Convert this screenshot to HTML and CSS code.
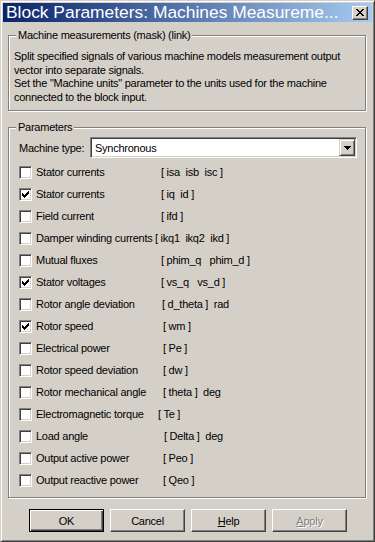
FILE: index.html
```html
<!DOCTYPE html>
<html>
<head>
<meta charset="utf-8">
<title>Block Parameters</title>
<link rel="stylesheet" href="styles.css">
</head>
<body>
<div class="window">
  <div class="titlebar">
    <span class="title">Block Parameters: Machines Measureme...</span>
    <span class="close">
      <svg width="8" height="7" viewBox="0 0 8 7" shape-rendering="crispEdges"><path fill="#000" d="M0 0h2v1h-2zM6 0h2v1h-2zM1 1h2v1h-2zM5 1h2v1h-2zM2 2h4v1h-4zM3 3h2v1h-2zM2 4h4v1h-4zM1 5h2v1h-2zM5 5h2v1h-2zM0 6h2v1h-2zM6 6h2v1h-2z"/></svg>
    </span>
  </div>

  <fieldset class="group group-desc">
    <legend>Machine measurements (mask) (link)</legend>
    <p class="desc">Split specified signals of various machine models measurement output<br>vector into separate signals.<br>Set the "Machine units" parameter to the units used for the machine<br>connected to the block input.</p>
  </fieldset>

  <fieldset class="group group-params">
    <legend>Parameters</legend>
    <div class="params-body">
      <div class="type-row">
        <span class="type-label">Machine type:</span>
        <div class="select">
          <span class="select-value">Synchronous</span>
          <span class="select-btn">
            <svg width="7" height="4" viewBox="0 0 7 4" shape-rendering="crispEdges"><path fill="#000" d="M0 0h7v1h-1v1h-1v1h-1v1h-1v-1h-1v-1h-1v-1h-1z"/></svg>
          </span>
        </div>
      </div>
      <ul class="signals">
        <li class="signal"><span class="cb"></span><span class="name">Stator currents</span><span class="unit">[ isa  isb  isc ]</span></li>
        <li class="signal"><span class="cb"><svg width="7" height="7" viewBox="0 0 7 7" shape-rendering="crispEdges"><path fill="#000" d="M0 2h1v1h1v1h1v-1h1v-1h1v-1h1v-1h1v3h-1v1h-1v1h-1v1h-1v1h-1v-1h-1v-1h-1z"/></svg></span><span class="name">Stator currents</span><span class="unit">[ iq  id ]</span></li>
        <li class="signal"><span class="cb"></span><span class="name">Field current</span><span class="unit">[ ifd ]</span></li>
        <li class="signal"><span class="cb"></span><span class="name">Damper winding currents</span><span class="unit u-m6">[ ikq1  ikq2  ikd ]</span></li>
        <li class="signal"><span class="cb"></span><span class="name">Mutual fluxes</span><span class="unit">[ phim_q   phim_d ]</span></li>
        <li class="signal"><span class="cb"><svg width="7" height="7" viewBox="0 0 7 7" shape-rendering="crispEdges"><path fill="#000" d="M0 2h1v1h1v1h1v-1h1v-1h1v-1h1v-1h1v3h-1v1h-1v1h-1v1h-1v1h-1v-1h-1v-1h-1z"/></svg></span><span class="name">Stator voltages</span><span class="unit">[ vs_q   vs_d ]</span></li>
        <li class="signal"><span class="cb"></span><span class="name">Rotor angle deviation</span><span class="unit u-p1">[ d_theta ]  rad</span></li>
        <li class="signal"><span class="cb"><svg width="7" height="7" viewBox="0 0 7 7" shape-rendering="crispEdges"><path fill="#000" d="M0 2h1v1h1v1h1v-1h1v-1h1v-1h1v-1h1v3h-1v1h-1v1h-1v1h-1v1h-1v-1h-1v-1h-1z"/></svg></span><span class="name">Rotor speed</span><span class="unit u-p2">[ wm ]</span></li>
        <li class="signal"><span class="cb"></span><span class="name">Electrical power</span><span class="unit u-p2">[ Pe ]</span></li>
        <li class="signal"><span class="cb"></span><span class="name">Rotor speed deviation</span><span class="unit u-p2">[ dw ]</span></li>
        <li class="signal"><span class="cb"></span><span class="name">Rotor mechanical angle</span><span class="unit u-p2">[ theta ]  deg</span></li>
        <li class="signal"><span class="cb"></span><span class="name">Electromagnetic torque</span><span class="unit u-m3">[ Te ]</span></li>
        <li class="signal"><span class="cb"></span><span class="name">Load angle</span><span class="unit u-p3">[ Delta ]  deg</span></li>
        <li class="signal"><span class="cb"></span><span class="name">Output active power</span><span class="unit u-p2">[ Peo ]</span></li>
        <li class="signal"><span class="cb"></span><span class="name">Output reactive power</span><span class="unit u-p2">[ Qeo ]</span></li>
      </ul>
    </div>
  </fieldset>

  <div class="buttons">
    <button class="btn btn-default">OK</button>
    <button class="btn">Cancel</button>
    <button class="btn"><u>H</u>elp</button>
    <button class="btn btn-disabled"><u>A</u>pply</button>
  </div>
</div>
</body>
</html>
```

FILE: styles.css
```css
html, body {
  margin: 0;
  padding: 0;
  background: #d4d0c8;
}

.window {
  box-sizing: border-box;
  width: 375px;
  height: 542px;
  background: #d4d0c8;
  border: 1px solid;
  border-color: #d4d0c8 #404040 #404040 #d4d0c8;
  box-shadow: inset 1px 1px 0 #fff, inset -1px -1px 0 #808080;
  padding: 2px;
  display: flex;
  flex-direction: column;
  font-family: "Liberation Sans", Arial, sans-serif;
  font-size: 11px;
  letter-spacing: -0.25px;
  color: #000;
  overflow: hidden;
}

.titlebar {
  height: 19px;
  flex: 0 0 19px;
  display: flex;
  align-items: center;
  padding: 0 4px 0 3px;
  background: linear-gradient(to right, #0a246a, #a6caf0);
}

.title {
  flex: 1;
  color: #fff;
  font-size: 17.4px;
  line-height: 19px;
  letter-spacing: 0;
  white-space: nowrap;
  overflow: hidden;
}

.close {
  box-sizing: border-box;
  width: 16px;
  height: 14px;
  display: flex;
  align-items: center;
  justify-content: center;
  background: #d4d0c8;
  border: 1px solid;
  border-color: #fff #404040 #404040 #fff;
  box-shadow: inset -1px -1px 0 #808080;
}

.group {
  margin: 7px 6px 0 5px;
  padding: 8px 8px 6px 5px;
  border: 1px solid #808080;
  box-shadow: 1px 1px 0 #fff, inset 1px 1px 0 #fff;
  min-width: 0;
}

.group legend {
  margin-left: 2px;
  padding: 0 2px;
  line-height: 13px;
  background: #d4d0c8;
}

.desc {
  margin: 0;
  line-height: 13.5px;
  white-space: nowrap;
}

.group-params {
  margin-top: 10px;
  padding-top: 3px;
}

.params-body {
  padding-left: 5px;
}

.type-row {
  display: flex;
  align-items: center;
  height: 21px;
}

.type-label {
  flex: 0 0 71px;
}

.select {
  flex: 1;
  box-sizing: border-box;
  height: 21px;
  display: flex;
  align-items: center;
  background: #fff;
  border: 1px solid;
  border-color: #808080 #fff #fff #808080;
  box-shadow: inset 1px 1px 0 #404040, inset -1px -1px 0 #d4d0c8;
  padding: 1px 1px 1px 4px;
}

.select-value {
  flex: 1;
}

.select-btn {
  box-sizing: border-box;
  width: 16px;
  height: 17px;
  display: flex;
  align-items: center;
  justify-content: center;
  background: #d4d0c8;
  border: 1px solid;
  border-color: #d4d0c8 #404040 #404040 #d4d0c8;
  box-shadow: inset 1px 1px 0 #fff, inset -1px -1px 0 #808080;
}

.signals {
  list-style: none;
  margin: 3px 0 0;
  padding: 0;
}

.signal {
  display: flex;
  align-items: center;
  height: 22px;
  white-space: pre;
}

.cb {
  box-sizing: border-box;
  flex: 0 0 13px;
  width: 13px;
  height: 13px;
  margin-top: 1px;
  margin-right: 4px;
  background: #fff;
  border: 1px solid;
  border-color: #808080 #fff #fff #808080;
  box-shadow: inset 1px 1px 0 #404040, inset -1px -1px 0 #d4d0c8;
  display: flex;
  align-items: center;
  justify-content: center;
}

.name {
  flex: 0 0 125px;
}

.u-m6 { margin-left: -6px; }
.u-m3 { margin-left: -3px; }
.u-p1 { margin-left: 1px; }
.u-p2 { margin-left: 2px; }
.u-p3 { margin-left: 3px; }

.buttons {
  display: flex;
  justify-content: center;
  gap: 6px;
  margin-top: 11px;
  padding-left: 1px;
}

.btn {
  box-sizing: border-box;
  width: 75px;
  height: 23px;
  padding: 0;
  font-family: "Liberation Sans", Arial, sans-serif;
  font-size: 11px;
  letter-spacing: -0.25px;
  color: #000;
  background: #d4d0c8;
  border: 1px solid;
  border-color: #fff #404040 #404040 #fff;
  box-shadow: inset -1px -1px 0 #808080, inset 1px 1px 0 #d4d0c8;
}

.btn-default {
  border-color: #000;
  box-shadow: inset 1px 1px 0 #fff, inset -1px -1px 0 #404040, inset -2px -2px 0 #808080;
}

.btn-disabled {
  color: #808080;
  text-shadow: 1px 1px 0 #fff;
}
```
